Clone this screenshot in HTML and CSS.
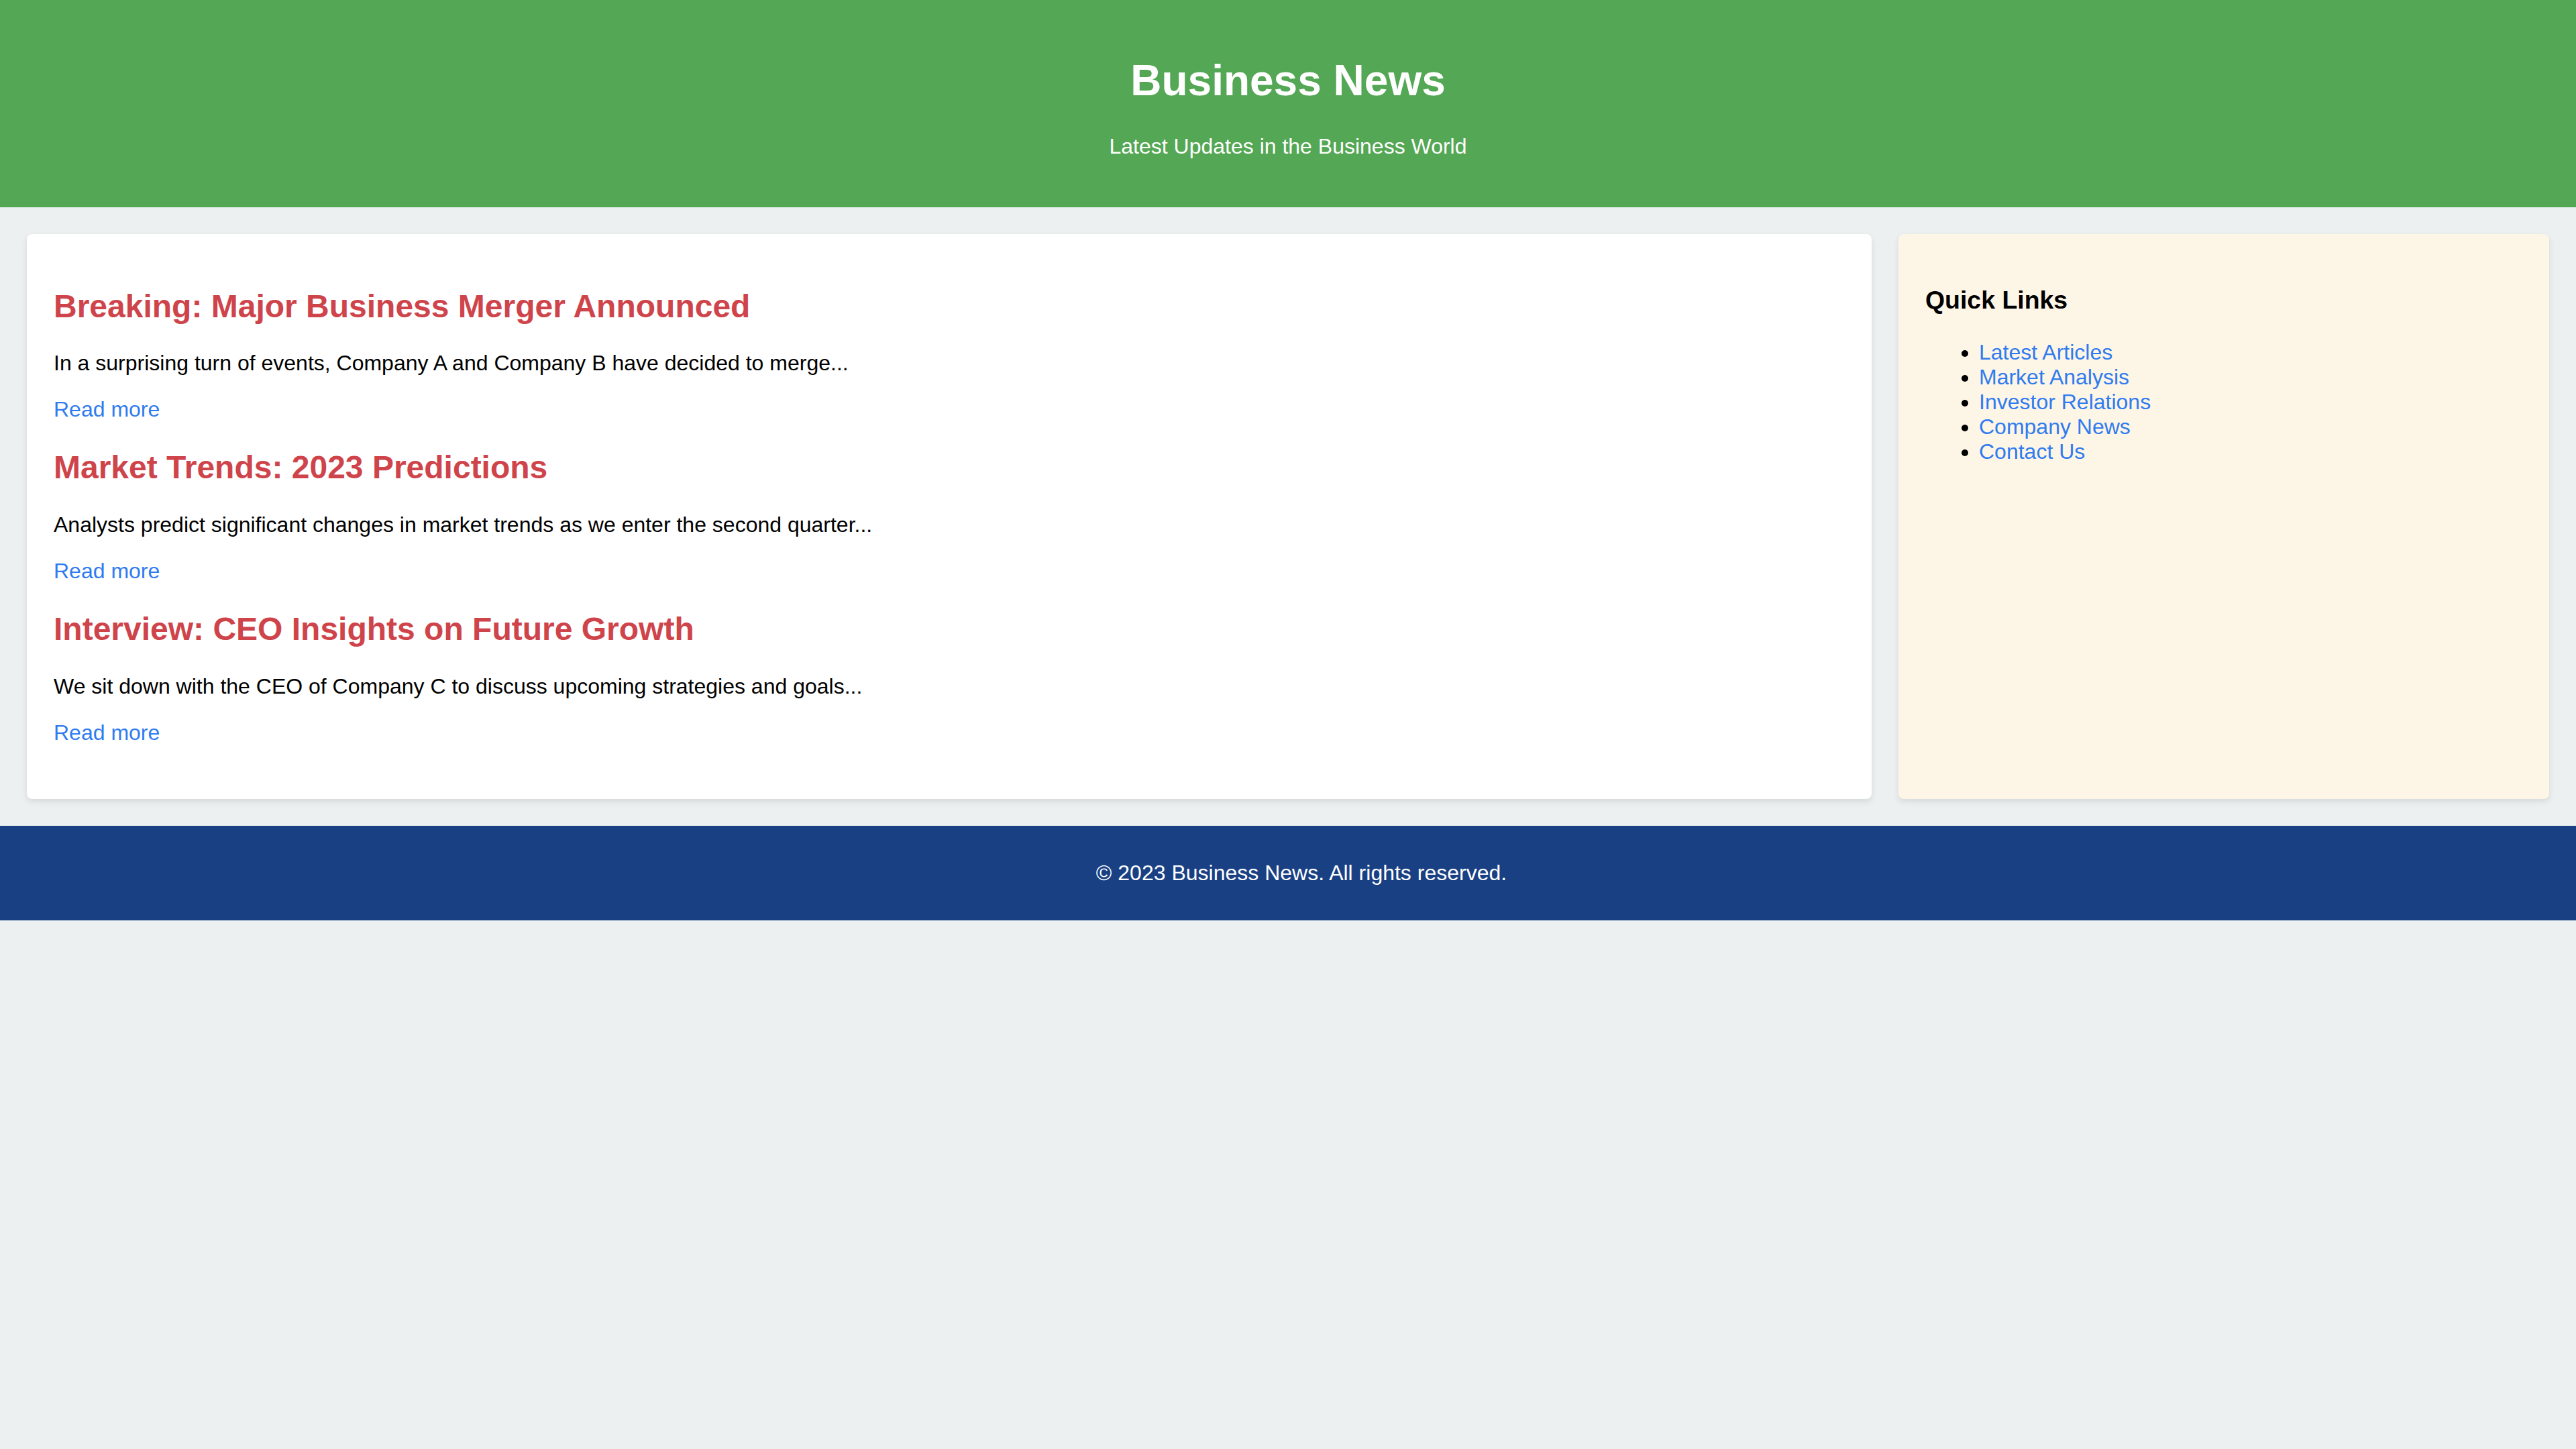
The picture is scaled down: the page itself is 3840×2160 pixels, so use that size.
FILE: index.html
```html
<!DOCTYPE html>
<html lang="en">
<head>
<meta charset="utf-8">
<title>Business News</title>
<link rel="stylesheet" href="styles.css">
</head>
<body>
<header class="site-header">
  <h1 class="site-title">Business News</h1>
  <p class="site-tagline">Latest Updates in the Business World</p>
</header>
<div class="layout">
  <main class="content">
    <article class="article">
      <h2 class="article-title">Breaking: Major Business Merger Announced</h2>
      <p class="article-text">In a surprising turn of events, Company A and Company B have decided to merge...</p>
      <p class="article-text"><a class="link" href="#">Read more</a></p>
    </article>
    <article class="article">
      <h2 class="article-title">Market Trends: 2023 Predictions</h2>
      <p class="article-text">Analysts predict significant changes in market trends as we enter the second quarter...</p>
      <p class="article-text"><a class="link" href="#">Read more</a></p>
    </article>
    <article class="article">
      <h2 class="article-title">Interview: CEO Insights on Future Growth</h2>
      <p class="article-text">We sit down with the CEO of Company C to discuss upcoming strategies and goals...</p>
      <p class="article-text"><a class="link" href="#">Read more</a></p>
    </article>
  </main>
  <aside class="sidebar">
    <h3 class="sidebar-title">Quick Links</h3>
    <ul class="link-list">
      <li><a class="link" href="#">Latest Articles</a></li>
      <li><a class="link" href="#">Market Analysis</a></li>
      <li><a class="link" href="#">Investor Relations</a></li>
      <li><a class="link" href="#">Company News</a></li>
      <li><a class="link" href="#">Contact Us</a></li>
    </ul>
  </aside>
</div>
<footer class="site-footer">
  <p class="footer-text">&copy; 2023 Business News. All rights reserved.</p>
</footer>
</body>
</html>
```

FILE: styles.css
```css
html, body {
  margin: 0;
  padding: 0;
}
body {
  background: #ecf0f1;
  font-family: "Liberation Sans", Arial, Helvetica, sans-serif;
  font-size: 32px;
  color: #000;
}
.site-header {
  background: #54a754;
  color: #fff;
  text-align: center;
  padding: 40px;
}
.site-title {
  font-size: 64px;
  font-weight: bold;
  margin: 42.88px 0;
}
.site-tagline {
  margin: 32px 0;
}
.layout {
  display: flex;
  align-items: stretch;
  gap: 40px;
  padding: 40px;
}
.content {
  flex: 3;
  background: #fff;
  padding: 40px;
  border-radius: 8px;
  box-shadow: 0 4px 10px rgba(0, 0, 0, 0.1);
}
.sidebar {
  flex: 1;
  background: #fdf5e6;
  padding: 40px;
  border-radius: 8px;
  box-shadow: 0 4px 10px rgba(0, 0, 0, 0.1);
}
.article {
  margin-bottom: 40px;
}
.article-title {
  color: #cf444b;
  font-size: 48px;
  font-weight: bold;
  margin: 39.84px 0;
}
.article-text {
  margin: 32px 0;
}
.link {
  color: #2f7bf0;
  text-decoration: none;
}
.sidebar-title {
  font-size: 37.44px;
  font-weight: bold;
  margin: 37.44px 0;
}
.link-list {
  margin: 32px 0;
  padding-left: 80px;
}
.site-footer {
  background: #1a4084;
  color: #fff;
  text-align: center;
  padding: 20px 0 20px 40px;
}
.footer-text {
  margin: 32px 0;
}
```
